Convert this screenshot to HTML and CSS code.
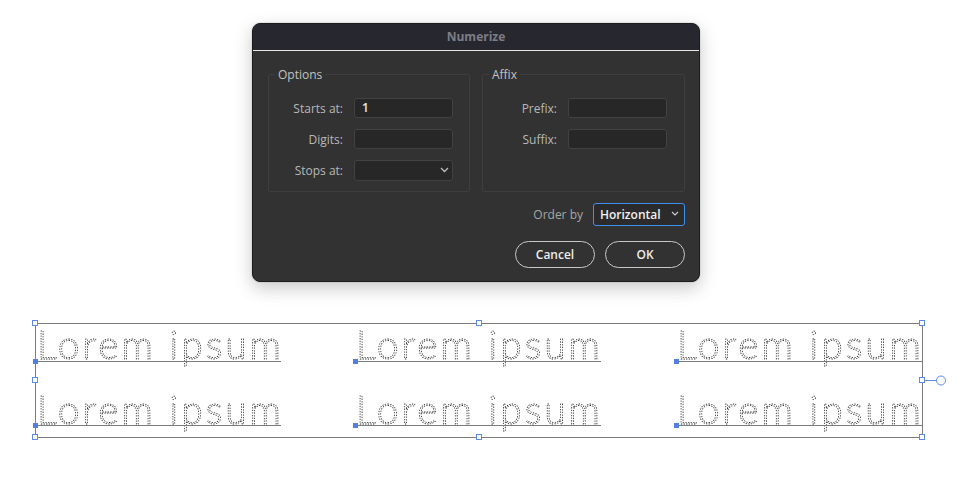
FILE: index.html
```html
<!DOCTYPE html>
<html>
<head>
<meta charset="utf-8">
<link rel="stylesheet" href="styles.css">
</head>
<body>
<div class="page">
  <div class="dialog">
    <div class="titlebar">Numerize</div>
    <div class="body">
      <div class="groups">
        <fieldset class="group">
          <legend>Options</legend>
          <div class="rows">
            <div class="row"><label>Starts at:</label><div class="field">1</div></div>
            <div class="row"><label>Digits:</label><div class="field"></div></div>
            <div class="row"><label>Stops at:</label><div class="field select">
              <svg class="chev" width="9" height="6" viewBox="0 0 9 6"><path d="M1 1 L4.5 4.5 L8 1" fill="none" stroke="#bdbdbd" stroke-width="1.3"/></svg>
            </div></div>
          </div>
        </fieldset>
        <fieldset class="group">
          <legend>Affix</legend>
          <div class="rows">
            <div class="row"><label>Prefix:</label><div class="field"></div></div>
            <div class="row"><label>Suffix:</label><div class="field"></div></div>
          </div>
        </fieldset>
      </div>
      <div class="order">
        <span class="order-label">Order by</span>
        <div class="order-select">Horizontal
          <svg class="chev2" width="8" height="5" viewBox="0 0 8 5"><path d="M1 1 L4 4 L7 1" fill="none" stroke="#cfcfcf" stroke-width="1.1"/></svg>
        </div>
      </div>
      <div class="buttons">
        <button class="btn">Cancel</button>
        <button class="btn">OK</button>
      </div>
    </div>
  </div>

  <svg class="artboard" width="960" height="160" viewBox="0 0 960 160">
    <rect x="35.5" y="23.5" width="887" height="114" fill="none" stroke="#7c7c7c" stroke-width="1"/>
    <g class="txt">
      <text x="37" y="59" textLength="244" lengthAdjust="spacing">Lorem ipsum</text>
      <text x="356" y="59" textLength="244" lengthAdjust="spacing">Lorem ipsum</text>
      <text x="677" y="59" textLength="244" lengthAdjust="spacing">Lorem ipsum</text>
      <text x="37" y="124" textLength="244" lengthAdjust="spacing">Lorem ipsum</text>
      <text x="356" y="124" textLength="244" lengthAdjust="spacing">Lorem ipsum</text>
      <text x="677" y="124" textLength="244" lengthAdjust="spacing">Lorem ipsum</text>
    </g>
    <g stroke="#7c7c7c" stroke-width="1">
      <line x1="36" y1="61.5" x2="281" y2="61.5"/>
      <line x1="355" y1="61.5" x2="601" y2="61.5"/>
      <line x1="676" y1="61.5" x2="922" y2="61.5"/>
      <line x1="36" y1="125.5" x2="281" y2="125.5"/>
      <line x1="355" y1="125.5" x2="601" y2="125.5"/>
      <line x1="676" y1="125.5" x2="922" y2="125.5"/>
    </g>
    <g fill="#4f7fe0">
      <rect x="33" y="59" width="5" height="5"/>
      <rect x="353" y="59" width="5" height="5"/>
      <rect x="674" y="59" width="5" height="5"/>
      <rect x="33" y="123" width="5" height="5"/>
      <rect x="353" y="123" width="5" height="5"/>
      <rect x="674" y="123" width="5" height="5"/>
    </g>
    <line x1="925" y1="80.5" x2="937" y2="80.5" stroke="#5b8be6" stroke-width="1"/>
    <circle cx="941" cy="80.5" r="4.5" fill="#fff" stroke="#5b8be6" stroke-width="1"/>
    <g fill="#fff" stroke="#5b8be6" stroke-width="1">
      <rect x="32.5" y="20.5" width="5" height="5"/>
      <rect x="476.5" y="20.5" width="5" height="5"/>
      <rect x="919.5" y="20.5" width="5" height="5"/>
      <rect x="32.5" y="77.5" width="5" height="5"/>
      <rect x="919.5" y="77.5" width="5" height="5"/>
      <rect x="32.5" y="134.5" width="5" height="5"/>
      <rect x="476.5" y="134.5" width="5" height="5"/>
      <rect x="919.5" y="134.5" width="5" height="5"/>
    </g>
  </svg>
</div>
</body>
</html>
```

FILE: styles.css
```css
* { box-sizing: border-box; }
html, body { margin: 0; padding: 0; background: #ffffff; }
body { font-family: "Open Sans", "Liberation Sans", sans-serif; }

.page {
  width: 960px;
  height: 480px;
  padding-top: 23px;
  overflow: hidden;
}

.dialog {
  margin-left: 252px;
  width: 448px;
  height: 259px;
  background: #323232;
  border: 1px solid #1c1c1c;
  border-radius: 8px;
  overflow: hidden;
  box-shadow: 0 0 0 1px rgba(0,0,0,0.06), 0 6px 18px rgba(0,0,0,0.22);
}

.titlebar {
  height: 27px;
  background: #27272f;
  border-bottom: 1px solid #e6e6e6;
  color: #7d7d85;
  font-size: 12px;
  font-weight: 700;
  text-align: center;
  line-height: 26px;
}

.body {
  padding: 15px 14px 12px 15px;
  display: flex;
  flex-direction: column;
}

.groups {
  display: grid;
  grid-template-columns: 202px 203px;
  column-gap: 12px;
}

.group {
  margin: 0;
  padding: 15px 0 10px 0;
  border: 1px solid #3e3e3e;
  border-radius: 2px;
  height: 126px;
  min-width: 0;
}

.group legend {
  margin-left: 6px;
  padding: 0 3px;
  font-size: 12px;
  color: #c2c2c2;
  line-height: 17px;
}

.rows {
  display: flex;
  flex-direction: column;
  gap: 11px;
}

.row {
  display: flex;
  align-items: center;
  height: 20px;
}

.row label {
  width: 74px;
  text-align: right;
  font-size: 12px;
  color: #b8b8b8;
  margin-right: 11px;
}

.field {
  width: 99px;
  height: 20px;
  background: #272727;
  border: 1px solid #424242;
  border-radius: 3px;
  color: #e8e8e8;
  font-size: 12px;
  font-weight: 600;
  line-height: 18px;
  padding-left: 7px;
}

.field.select {
  height: 21px;
  display: flex;
  align-items: center;
  justify-content: flex-end;
  padding-right: 3px;
}

.chev { display: block; }

.order {
  margin-top: 11px;
  display: flex;
  justify-content: flex-end;
  align-items: center;
  height: 23px;
}

.order-label {
  font-size: 12px;
  color: #a6a6a6;
  margin-right: 10px;
}

.order-select {
  width: 92px;
  height: 23px;
  border: 1px solid #3d8ff0;
  border-radius: 3px;
  background: #2b2b2b;
  color: #f0f0f0;
  font-size: 12px;
  font-weight: 600;
  display: flex;
  align-items: center;
  justify-content: space-between;
  padding: 0 5px 0 6px;
}

.chev2 { display: block; margin-top: -2px; }

.buttons {
  margin-top: 15px;
  display: flex;
  justify-content: flex-end;
  gap: 10px;
}

.btn {
  width: 80px;
  height: 27px;
  border: 1.5px solid #c8c8c8;
  border-radius: 14px;
  background: transparent;
  color: #ececec;
  font-family: "Open Sans", "Liberation Sans", sans-serif;
  font-size: 12px;
  font-weight: 600;
  padding: 0;
}

.artboard {
  display: block;
  margin-top: 18px;
  will-change: transform;
}

.txt {
  opacity: 0.99;
}

.txt text {
  font-family: "Lato", "Open Sans", sans-serif;
  font-weight: 300;
  font-size: 39px;
  fill: none;
  stroke: #262626;
  stroke-width: 0.8;
  stroke-dasharray: 1.3 1.3;
}
```
